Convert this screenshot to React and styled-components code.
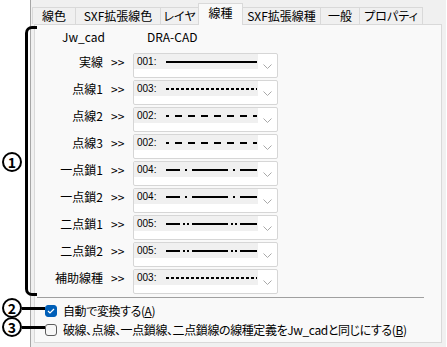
import React from 'react';
import styled, {createGlobalStyle} from 'styled-components';

const GlobalStyle = createGlobalStyle`
  body {
    margin: 0;
    background: #ffffff;
    font-family: "Noto Sans CJK JP", "Open Sans", sans-serif;
    font-size: 12px;
    font-feature-settings: "palt";
    color: #000;
  }
`;

const tabs = [
  {label: '線色', w: 44},
  {label: 'SXF拡張線色', w: 86},
  {label: 'レイヤ', w: 39},
  {label: '線種', w: 45, active: true},
  {label: 'SXF拡張線種', w: 79},
  {label: '一般', w: 40},
  {label: 'プロパティ', w: 64},
];

const rows = [
  {label: '実線', code: '001:', dash: null},
  {label: '点線1', code: '003:', dash: '3 2'},
  {label: '点線2', code: '002:', dash: '7 6', offset: 4},
  {label: '点線3', code: '002:', dash: '7 6', offset: 4},
  {label: '一点鎖1', code: '004:', dash: '36 5 2 5', offset: 22},
  {label: '一点鎖2', code: '004:', dash: '36 5 2 5', offset: 22},
  {label: '二点鎖1', code: '005:', dash: '36 3 2 2 2 3', offset: 22},
  {label: '二点鎖2', code: '005:', dash: '36 3 2 2 2 3', offset: 22},
  {label: '補助線種', code: '003:', dash: '3 2'},
];

const LineSample = ({dash, offset}) => (
  <svg width="91" height="4" viewBox="0 0 91 4">
    <line x1="0" y1="2" x2="91" y2="2" stroke="#000" strokeWidth="2"
          strokeDasharray={dash || undefined} strokeDashoffset={offset || 0}/>
  </svg>
);

const Chevron = () => (
  <svg width="9" height="5" viewBox="0 0 9 5">
    <path d="M0.5 0.5 L4.5 4.5 L8.5 0.5" fill="none" stroke="#a8a8a8" strokeWidth="1"/>
  </svg>
);

const Check = () => (
  <svg width="8" height="6" viewBox="0 0 8 6">
    <path d="M1 3 L3 5 L7 1" fill="none" stroke="#fff" strokeWidth="1.2"/>
  </svg>
);

const App = () => (
  <Page>
    <GlobalStyle/>
    <Dialog>
      <TabBar>
        {tabs.map(t =>
          <Tab key={t.label} w={t.w} active={t.active}>{t.label}</Tab>
        )}
      </TabBar>
      <Panel>
        <Header>
          <span>Jw_cad</span>
          <span>DRA-CAD</span>
        </Header>
        <RowList>
          {rows.map(r =>
            <Row key={r.label}>
              <RowLabel>{r.label}</RowLabel>
              <Arrow>&gt;&gt;</Arrow>
              <Combo>
                <ComboValue>
                  <Code>{r.code}</Code>
                  <LineSample dash={r.dash} offset={r.offset}/>
                </ComboValue>
                <ComboButton><Chevron/></ComboButton>
              </Combo>
            </Row>
          )}
        </RowList>
        <Separator/>
        <CheckList>
          <CheckRow>
            <Box checked><Check/></Box>
            <span>自動で変換する(<u>A</u>)</span>
          </CheckRow>
          <CheckRow>
            <Box/>
            <span>破線、点線、一点鎖線、二点鎖線の線種定義をJw_cadと同じにする(<u>B</u>)</span>
          </CheckRow>
        </CheckList>
      </Panel>
    </Dialog>

    <Bracket/>
    <Marker top={152}>1</Marker>
    <Marker top={298}>2</Marker>
    <Marker top={317}>3</Marker>
    <Leader top={307}/>
    <Leader top={326}/>
  </Page>
);

const Page = styled.div`
  position: relative;
  width: 447px;
  height: 347px;
  overflow: hidden;
`;

const Dialog = styled.div`
  margin-left: 30px;
  width: 416px;
  height: 347px;
  box-sizing: border-box;
  border-left: 1px solid #a6a6a6;
  background: #f0f0f0;
  padding: 3px 0 0 1px;
`;

const TabBar = styled.div`
  display: flex;
  align-items: flex-end;
  height: 21px;
  position: relative;
  z-index: 1;
`;

const Tab = styled.div`
  width: ${({w}) => w}px;
  height: ${({active}) => active ? 22 : 17}px;
  box-sizing: border-box;
  flex: none;
  border: 1px solid #d9d9d9;
  border-bottom: none;
  margin-right: -1px;
  background: ${({active}) => active ? '#f9f9f9' : '#f0f0f0'};
  margin-bottom: ${({active}) => active ? -1 : 0}px;
  text-align: center;
  line-height: ${({active}) => active ? 17 : 15}px;
  white-space: nowrap;
  font-size: 12px;
`;

const Panel = styled.div`
  margin-left: 2px;
  width: 408px;
  height: 319px;
  box-sizing: border-box;
  border: 1px solid #d9d9d9;
  background: #f9f9f9;
  padding: 5px 0 0 0;
`;

const Header = styled.div`
  display: flex;
  gap: 42px;
  padding-left: 27px;
  height: 14px;
  line-height: 14px;
  margin-bottom: 9px;
`;

const RowList = styled.div`
  display: flex;
  flex-direction: column;
  gap: 2px;
`;

const Row = styled.div`
  display: flex;
  align-items: flex-start;
  height: 25px;
`;

const RowLabel = styled.div`
  width: 68px;
  text-align: right;
  line-height: 14px;
  padding-top: 2px;
  white-space: nowrap;
`;

const Arrow = styled.div`
  width: 22px;
  padding-left: 8px;
  box-sizing: border-box;
  line-height: 14px;
  padding-top: 2px;
  margin-right: 8px;
`;

const Combo = styled.div`
  display: flex;
  width: 145px;
  height: 25px;
  box-sizing: border-box;
  border: 1px solid #d6d6d6;
  border-radius: 2px;
  background: #ffffff;
`;

const ComboValue = styled.div`
  display: flex;
  align-items: center;
  width: 124px;
  height: 15px;
  background: #f0f0f0;
  padding-left: 3px;
  box-sizing: border-box;
`;

const Code = styled.span`
  font-family: "Liberation Sans", sans-serif;
  font-size: 10px;
  width: 29px;
  flex: none;
`;

const ComboButton = styled.div`
  flex: 1;
  display: flex;
  justify-content: center;
  padding-top: 10px;
`;

const Separator = styled.div`
  margin: 3px 0 0 2px;
  width: 387px;
  height: 1px;
  background: #a0a0a0;
`;

const CheckList = styled.div`
  display: flex;
  flex-direction: column;
  padding: 3px 0 0 10px;
`;

const CheckRow = styled.div`
  display: flex;
  align-items: center;
  gap: 6px;
  height: 19px;
  white-space: nowrap;
  letter-spacing: -0.4px;
  u {
    text-decoration-thickness: 1px;
    text-underline-offset: 1px;
  }
`;

const Box = styled.div`
  width: 12px;
  height: 12px;
  flex: none;
  box-sizing: border-box;
  border-radius: 3px;
  display: flex;
  align-items: center;
  justify-content: center;
  border: 1px solid ${({checked}) => checked ? '#005fb8' : '#5d5d5d'};
  background: ${({checked}) => checked ? '#005fb8' : '#f7f7f7'};
`;

const Bracket = styled.div`
  position: absolute;
  left: 25px;
  top: 26px;
  width: 9px;
  height: 264px;
  border: 3px solid #000;
  border-right: none;
  border-radius: 7px 0 0 7px;
`;

const Marker = styled.div`
  position: absolute;
  left: 2px;
  top: ${({top}) => top}px;
  width: 20px;
  height: 20px;
  box-sizing: border-box;
  border: 2px solid #000;
  border-radius: 50%;
  background: #fff;
  display: flex;
  align-items: center;
  justify-content: center;
  font-family: "Noto Sans CJK JP", sans-serif;
  font-weight: 700;
  font-size: 14px;
  line-height: 1;
`;

const Leader = styled.div`
  position: absolute;
  left: 22px;
  top: ${({top}) => top}px;
  width: 23px;
  height: 3px;
  background: #000;
`;

export default App;
